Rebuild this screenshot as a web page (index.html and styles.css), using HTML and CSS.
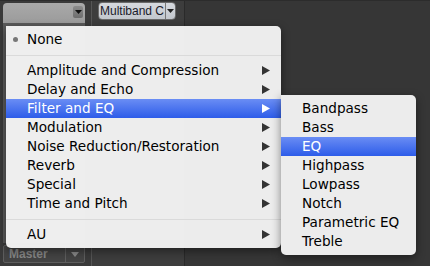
FILE: index.html
```html
<!DOCTYPE html>
<html>
<head>
<meta charset="utf-8">
<link rel="stylesheet" href="styles.css">
</head>
<body>
<div class="stage">
  <div class="strips">
    <div class="strip strip-a">
      <div class="combo-light">
        <span class="combo-light-btn"><svg width="7" height="4" viewBox="0 0 7 4"><polygon points="0,0 7,0 3.5,4" fill="#111"/></svg></span>
      </div>
      <div class="strip-fill"></div>
      <div class="combo-dark">
        <span class="combo-dark-text">Master</span>
        <span class="combo-dark-btn"><svg width="8" height="5" viewBox="0 0 8 5"><polygon points="0,0 8,0 4,5" fill="#8a8a8a"/></svg></span>
      </div>
    </div>
    <div class="strip strip-b">
      <div class="combo-fx">
        <span class="combo-fx-text">Multiband C</span>
        <span class="combo-fx-btn"><svg width="7" height="4" viewBox="0 0 7 4"><polygon points="0,0 7,0 3.5,4" fill="#222"/></svg></span>
      </div>
    </div>
    <div class="strip strip-c"></div>
  </div>

  <div class="menu main-menu">
    <div class="item"><span class="bullet"></span>None</div>
    <div class="sep"></div>
    <div class="item sub">Amplitude and Compression<svg class="arrow" width="8" height="9" viewBox="0 0 8 9"><polygon points="0,0 8,4.5 0,9"/></svg></div>
    <div class="item sub">Delay and Echo<svg class="arrow" width="8" height="9" viewBox="0 0 8 9"><polygon points="0,0 8,4.5 0,9"/></svg></div>
    <div class="item sub active">Filter and EQ<svg class="arrow" width="8" height="9" viewBox="0 0 8 9"><polygon points="0,0 8,4.5 0,9"/></svg></div>
    <div class="item sub">Modulation<svg class="arrow" width="8" height="9" viewBox="0 0 8 9"><polygon points="0,0 8,4.5 0,9"/></svg></div>
    <div class="item sub">Noise Reduction/Restoration<svg class="arrow" width="8" height="9" viewBox="0 0 8 9"><polygon points="0,0 8,4.5 0,9"/></svg></div>
    <div class="item sub">Reverb<svg class="arrow" width="8" height="9" viewBox="0 0 8 9"><polygon points="0,0 8,4.5 0,9"/></svg></div>
    <div class="item sub">Special<svg class="arrow" width="8" height="9" viewBox="0 0 8 9"><polygon points="0,0 8,4.5 0,9"/></svg></div>
    <div class="item sub">Time and Pitch<svg class="arrow" width="8" height="9" viewBox="0 0 8 9"><polygon points="0,0 8,4.5 0,9"/></svg></div>
    <div class="sep"></div>
    <div class="item sub">AU<svg class="arrow" width="8" height="9" viewBox="0 0 8 9"><polygon points="0,0 8,4.5 0,9"/></svg></div>
  </div>

  <div class="menu sub-menu">
    <div class="item">Bandpass</div>
    <div class="item">Bass</div>
    <div class="item active">EQ</div>
    <div class="item">Highpass</div>
    <div class="item">Lowpass</div>
    <div class="item">Notch</div>
    <div class="item">Parametric EQ</div>
    <div class="item">Treble</div>
  </div>
</div>
</body>
</html>
```

FILE: styles.css
```css
* { box-sizing: border-box; }
html, body { margin: 0; padding: 0; }
body {
  background: #363636;
  width: 430px;
  height: 266px;
  overflow: hidden;
  font-family: "DejaVu Sans", "Liberation Sans", sans-serif;
}
.stage {
  position: relative;
  width: 430px;
  height: 266px;
}
.strips {
  display: flex;
  height: 266px;
  border-top: 1px solid #2c2c2c;
}
.strip { height: 100%; }
.strip-a {
  width: 92px;
  background: #3a3a3a;
  border-right: 1px solid #555;
  display: flex;
  flex-direction: column;
  padding: 2px 6px 3px 3px;
}
.combo-light {
  height: 20px;
  border-radius: 4px 4px 0 0;
  background: linear-gradient(#a9a9a9, #9b9b9b);
  display: flex;
  justify-content: flex-end;
  padding: 3px 2px 0 0;
}
.combo-light-btn {
  width: 10px;
  height: 12px;
  background: linear-gradient(#8c8c8c, #6e6e6e);
  border-radius: 2px;
  display: flex;
  align-items: center;
  justify-content: center;
}
.strip-fill {
  flex: 1;
  background: #5a5a5a;
}
.combo-dark {
  height: 18px;
  margin-top: 2px;
  border: 1px solid #5e5e5e;
  border-radius: 2px;
  background: #444;
  display: flex;
  align-items: center;
}
.combo-dark-text {
  flex: 1;
  font-family: "Liberation Sans", sans-serif;
  font-weight: bold;
  font-size: 12px;
  color: #878787;
  padding-left: 5px;
}
.combo-dark-btn {
  width: 19px;
  height: 100%;
  border-left: 1px solid #5e5e5e;
  display: flex;
  align-items: center;
  justify-content: center;
}
.strip-b {
  width: 93px;
  background: #3d3d3d;
  border-right: 1px solid #2a2a2a;
  padding: 1px 8px 0 6px;
}
.combo-fx {
  height: 18px;
  border: 1px solid #6a6a6a;
  border-radius: 4px;
  background: linear-gradient(#d6d9de, #c3c7cd);
  display: flex;
  align-items: center;
  overflow: hidden;
}
.combo-fx-text {
  flex: 1;
  font-family: "Liberation Sans", sans-serif;
  font-size: 12px;
  color: #1a1a2a;
  padding-left: 1px;
  white-space: nowrap;
}
.combo-fx-btn {
  width: 10px;
  height: 100%;
  border-left: 1px solid #777;
  display: flex;
  align-items: center;
  justify-content: center;
}
.strip-c {
  flex: 1;
  background: #363636;
}

.menu {
  position: absolute;
  background: rgba(243, 243, 243, 0.97);
  border-radius: 0 5px 5px 5px;
  padding: 4px 0;
  box-shadow: 0 3px 10px rgba(0, 0, 0, 0.45);
  font-size: 13.6px;
  color: #000;
}
.main-menu {
  left: 6px;
  top: 26px;
  width: 275px;
}
.sub-menu {
  left: 281px;
  top: 95px;
  width: 135px;
}
.item {
  height: 19px;
  line-height: 19px;
  padding-left: 21px;
  position: relative;
  display: flex;
  align-items: center;
  white-space: nowrap;
}
.item.sub { justify-content: space-between; padding-right: 11px; }
.arrow { fill: #333; }
.item.active {
  background: linear-gradient(#6a8df4, #2d5ce9);
  color: #fff;
}
.item.active .arrow { fill: #fff; }
.bullet {
  position: absolute;
  left: 7px;
  top: 7px;
  width: 5px;
  height: 5px;
  border-radius: 50%;
  background: #777;
}
.sep {
  height: 12px;
  display: flex;
  align-items: center;
}
.sep::before {
  content: "";
  flex: 1;
  height: 1px;
  background: #dadada;
}
```
